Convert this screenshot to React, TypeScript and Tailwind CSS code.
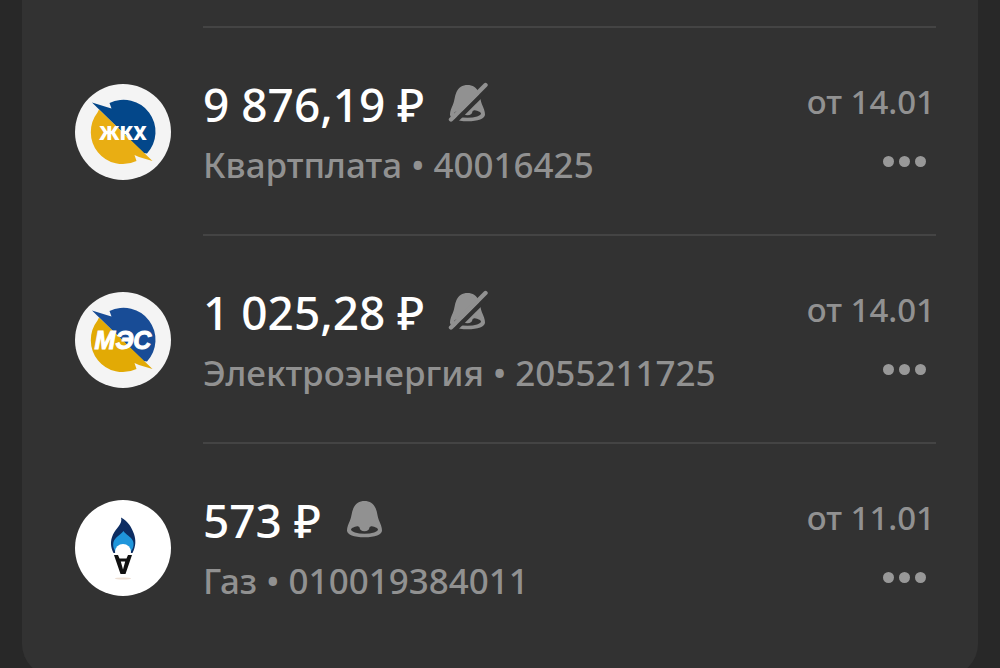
import type { ReactNode } from "react";

type Bill = {
    id: string;
    amount: string;
    title: string;
    account: string;
    date: string;
    muted: boolean;
    logo: ReactNode;
};

function BellShape() {
    return (
        <>
            <path
                d="M19.500 3C14.500 3 10.500 5.500 8.500 10C6.500 14.500 6.500 19 5 22.500C3.500 26 2 29 2 32.500C2 36.500 9 39.300 19.500 39.300C30 39.300 37 36.500 37 32.500C37 29 35.500 26 34 22.500C32.500 19 32.500 14.500 30.500 10C28.500 5.500 24.500 3 19.500 3Z"
                fill="#919191"
            />
            <ellipse cx="19.5" cy="31.600" rx="13.500" ry="4.200" fill="#323232" />
            <path
                d="M10 25H29L26 28.500C25.500 28.500 24.700 28.500 24.500 29.500C24 32 22.500 33.300 19.500 33.300C16.500 33.300 15 32 14.500 29.500C14.300 28.500 13.500 28.500 13 28.500Z"
                fill="#919191"
            />
        </>
    );
}

function Bell() {
    return (
        <svg viewBox="0 0 40 40" className="size-10 shrink-0" aria-hidden="true">
            <BellShape />
        </svg>
    );
}

function BellOff() {
    return (
        <svg viewBox="0 0 40 40" className="size-10 shrink-0" aria-hidden="true">
            <BellShape />
            <path d="M4.500 42L41.500 5" stroke="#323232" strokeWidth="4.500" />
            <path d="M3 37.500L37.500 3" stroke="#919191" strokeWidth="4.400" strokeLinecap="round" />
        </svg>
    );
}

function BoltLogo({ blue, yellow, children }: { blue: string; yellow: string; children: ReactNode }) {
    return (
        <svg viewBox="0 0 96 96" className="size-24 shrink-0" aria-hidden="true">
            <circle cx="48" cy="48" r="48" fill="#f4f4f4" />
            <path
                d="M17 18.500L31.500 23L36.500 24.500L34.500 19A32 32 0 0 1 72 69.500L68.500 69Z"
                fill={blue}
            />
            <path
                d="M77.500 77L64 73L59.500 71L61.500 77A32 32 0 0 1 22.500 28.500L24 25.500Z"
                fill={yellow}
            />
            {children}
        </svg>
    );
}

function GasLogo() {
    return (
        <svg viewBox="0 0 96 96" className="size-24 shrink-0" aria-hidden="true">
            <circle cx="48" cy="48" r="48" fill="#ffffff" />
            <path
                d="M46 17.500C48 24 41 28 38 34.500C35 41 35.500 47 38.500 53H57.500C61 46 61 40 59 34C57 28 53 21 46 17.500Z"
                fill="#0d2d62"
            />
            <path
                d="M48.500 31C46 34.500 40 37 38.500 42C37.500 46 39 50 41 52H55.500C58 49 59.500 45 58 41C56 36.500 51 35 48.500 31Z"
                fill="#1f96dc"
            />
            <circle cx="48" cy="52" r="8" fill="#ffffff" />
            <path
                d="M39 55H43L44.500 58.500H51.500L53 55H57L50.500 74H45.500ZM45.800 61.500L48 69.500L50.200 61.500Z"
                fill="#111111"
                fillRule="evenodd"
            />
            <ellipse cx="48" cy="78.500" rx="8" ry="1" fill="#eee0d4" />
        </svg>
    );
}

const bills: Bill[] = [
    {
        id: "rent",
        amount: "9 876,19 ₽",
        title: "Квартплата",
        account: "40016425",
        date: "14.01",
        muted: true,
        logo: (
            <BoltLogo blue="#03478a" yellow="#e9ae13">
                <text
                    x="48"
                    y="56"
                    textAnchor="middle"
                    className="fill-white font-['Noto_Sans',sans-serif] text-[19px] font-black"
                >
                    ЖКХ
                </text>
            </BoltLogo>
        ),
    },
    {
        id: "power",
        amount: "1 025,28 ₽",
        title: "Электроэнергия",
        account: "2055211725",
        date: "14.01",
        muted: true,
        logo: (
            <BoltLogo blue="#184c96" yellow="#e2aa05">
                <text
                    x="48"
                    y="57"
                    textAnchor="middle"
                    className="fill-white stroke-white stroke-1 font-['Liberation_Sans',sans-serif] text-[25px] font-bold italic"
                >
                    МЭС
                </text>
            </BoltLogo>
        ),
    },
    {
        id: "gas",
        amount: "573 ₽",
        title: "Газ",
        account: "010019384011",
        date: "11.01",
        muted: false,
        logo: <GasLogo />,
    },
];

function BillRow({ bill }: { bill: Bill }) {
    return (
        <li className="flex h-52 gap-8">

            <div className="flex items-center pt-1">
                {bill.logo}
            </div>

            <div className="flex min-w-0 flex-1 justify-between border-t-2 border-[#444444]">

                <div className="min-w-0 pt-12">

                    <div className="flex items-start gap-6">
                        <p className="text-[46px] leading-[56px] font-medium whitespace-nowrap text-white">
                            {bill.amount}
                        </p>
                        <div className="pt-1.5">
                            {bill.muted ? <BellOff /> : <Bell />}
                        </div>
                    </div>

                    <p className="mt-1 text-[35px] leading-[58px] font-medium whitespace-nowrap text-[#919191]">
                        {bill.title} • {bill.account}
                    </p>

                </div>

                <div className="flex shrink-0 flex-col items-end pt-14">

                    <time className="pr-px text-[33px] leading-[36px] font-medium text-[#919191]">
                        от {bill.date}
                    </time>

                    <button type="button" aria-label="Ещё" className="mt-5 flex h-[42px] items-center gap-[5px] px-[10px]">
                        <span className="size-[11px] rounded-full bg-[#989898]" />
                        <span className="size-[11px] rounded-full bg-[#989898]" />
                        <span className="size-[11px] rounded-full bg-[#989898]" />
                    </button>

                </div>

            </div>

        </li>
    );
}

export default function App() {
    return (
        <main className="h-screen overflow-hidden bg-[#282828] px-[22px] font-['Noto_Sans',sans-serif]">

            <ul className="rounded-b-[32px] bg-[#323232] pt-[26px] pr-[42px] pb-[26px] pl-[53px]">
                {bills.map((bill) => (
                    <BillRow key={bill.id} bill={bill} />
                ))}
            </ul>

        </main>
    );
}
